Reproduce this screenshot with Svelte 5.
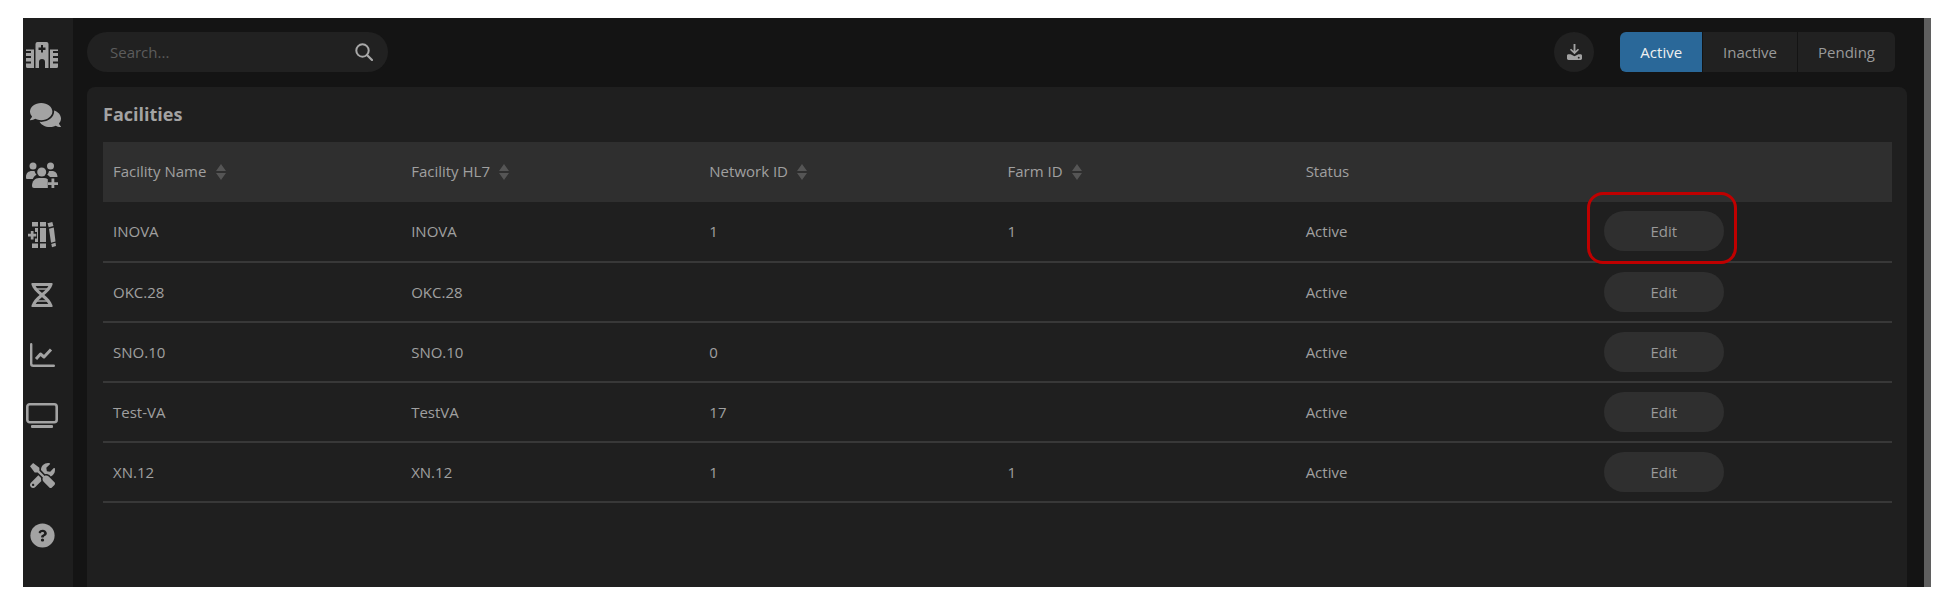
<script lang="ts">
	const columns = [
		{ label: 'Facility Name', sortable: true },
		{ label: 'Facility HL7', sortable: true },
		{ label: 'Network ID', sortable: true },
		{ label: 'Farm ID', sortable: true },
		{ label: 'Status', sortable: false },
		{ label: '', sortable: false }
	];

	const facilities = [
		{ name: 'INOVA', hl7: 'INOVA', network: '1', farm: '1', status: 'Active' },
		{ name: 'OKC.28', hl7: 'OKC.28', network: '', farm: '', status: 'Active' },
		{ name: 'SNO.10', hl7: 'SNO.10', network: '0', farm: '', status: 'Active' },
		{ name: 'Test-VA', hl7: 'TestVA', network: '17', farm: '', status: 'Active' },
		{ name: 'XN.12', hl7: 'XN.12', network: '1', farm: '1', status: 'Active' }
	];

	const tabs = ['Active', 'Inactive', 'Pending'];
	let activeTab = $state('Active');
</script>

<div class="frame">
	<nav class="sidebar">
		<a href="#facilities" aria-label="Facilities">
			<svg viewBox="0 0 32 26" width="32" height="26">
				<g fill="currentColor" fill-rule="evenodd">
					<path d="M9.500 2a2 2 0 0 1 2-2h9a2 2 0 0 1 2 2v24H19v-6a3 3 0 0 0-6 0v6H9.500zM15 3v2.500h-2.500v2.500H15v2.500h2V8h2.500V5.500H17V3z"/>
					<path d="M0 7.500h8V26H1.500A1.500 1.500 0 0 1 0 24.500v-3h5v-2H0V16h5v-2H0v-3h5V9H0z"/>
					<path d="M32 7.500h-8V26h6.500a1.500 1.500 0 0 0 1.500-1.500v-3h-5v-2h5V16h-5v-2h5v-3h-5V9h5z"/>
				</g>
			</svg>
		</a>
		<a href="#messages" class="shift" aria-label="Messages">
			<svg viewBox="0 0 576 512" width="31" height="28">
				<path fill="currentColor" d="M416 192c0-88.4-93.1-160-208-160S0 103.6 0 192c0 34.3 14.1 65.9 38 92-13.4 30.2-35.5 54.2-35.8 54.5-2.2 2.3-2.8 5.7-1.5 8.7S4.8 352 8 352c36.6 0 66.9-12.3 88.7-25 32.2 15.7 70.3 25 111.3 25 114.9 0 208-71.6 208-160zm122 220c23.9-26 38-57.7 38-92 0-66.9-53.5-124.2-129.3-148.1.9 6.6 1.3 13.3 1.3 20.1 0 105.9-107.7 192-240 192-10.8 0-21.3-.8-31.7-1.9C207.8 439.6 281.8 480 368 480c41 0 79.1-9.2 111.3-25 21.8 12.7 52.1 25 88.7 25 3.2 0 6.1-1.9 7.3-4.8 1.3-2.9.7-6.3-1.5-8.7-.3-.3-22.4-24.2-35.8-54.5z"/>
			</svg>
		</a>
		<a href="#users" aria-label="Users">
			<svg viewBox="0 0 32 26" width="32" height="26">
				<g fill="currentColor">
					<circle cx="7" cy="4" r="3.500"/>
					<circle cx="24.500" cy="4" r="3.500"/>
					<path d="M0 15c0-4 2.500-6 6-6h2.500c.3 1.500 1 2.800 2 3.800-1.700 1-3 2.400-3.700 4.200H1a1 1 0 0 1-1-1zM23 9h3c3 0 5.500 2 5.500 6H24c-.8-1-1.700-1.700-2.800-2.300 1-1 1.600-2.300 1.800-3.700z"/>
					<circle cx="15.700" cy="10" r="4.500"/>
					<path d="M6 24c0-5 3-8 7-8h5c1.500 0 2.800.4 3.800 1.200V26H8a2 2 0 0 1-2-2z"/>
					<path d="M25.500 16.500h2.800v3.700H32V23h-3.700v3h-2.800v-3H22v-2.800h3.500z"/>
				</g>
			</svg>
		</a>
		<a href="#library" aria-label="Library">
			<svg viewBox="0 0 28 26" width="28" height="26">
				<g fill="currentColor">
					<path d="M4 0h6v4.500H4zM12 0h6v4.500h-6zM7 6h3v4H7zM10 6v14H7v-3.500h2V9.500H7V6zM12 6h6v14h-6zM4 21.500h6V26H4zM12 21.500h6V26h-6z"/>
					<path d="M2.800 9h2.700v2.800h2.800v2.700H5.500v3H2.800v-3H0v-2.700h2.800z"/>
					<path d="M19.500 1.200l4.800-1.200 1.100 4-4.700 1.300zM21 6.700l4.800-1.300 1.700 14-4.500 1.300zM23.300 22l4.200-1.200.500 3.200-4 1.300z"/>
				</g>
			</svg>
		</a>
		<a href="#genetics" aria-label="Genetics">
			<svg viewBox="0 0 22 26" width="22" height="26">
				<g fill="none" stroke="currentColor">
					<path stroke-width="3" d="M2 1c0 9 18 15 18 24M20 1C20 10 2 16 2 25"/>
					<path stroke-width="3" stroke-linecap="round" d="M2 2.500h18M2 23.500h18"/>
					<path stroke-width="1.500" d="M5 7h12M5 19h12"/>
				</g>
			</svg>
		</a>
		<a href="#reports" aria-label="Reports">
			<svg viewBox="0 0 25 24" width="25" height="24">
				<path fill="none" stroke="currentColor" stroke-width="2.400" stroke-linecap="round" stroke-linejoin="round" d="M1.200 1.200v19.600a2 2 0 0 0 2 2h20.600"/>
				<path fill="none" stroke="currentColor" stroke-width="3" stroke-linejoin="round" d="M6 16l4.500-5 3.500 3 7-7.500"/>
			</svg>
		</a>
		<a href="#devices" aria-label="Devices">
			<svg viewBox="0 0 32 25" width="32" height="25">
				<rect x="1.300" y="1.300" width="29.400" height="17.900" rx="2.500" fill="none" stroke="currentColor" stroke-width="2.600"/>
				<rect x="5" y="22" width="22" height="3" rx="1" fill="currentColor"/>
			</svg>
		</a>
		<a href="#tools" aria-label="Tools">
			<svg viewBox="0 0 512 512" width="25" height="25">
				<path fill="currentColor" d="M501.1 395.7L384 278.6c-23.1-23.1-57.6-27.6-85.4-13.9L192 158.1V96L64 0 0 64l96 128h62.1l106.6 106.6c-13.6 27.8-9.2 62.3 13.9 85.4l117.1 117.1c14.6 14.6 38.2 14.6 52.7 0l52.7-52.7c14.5-14.6 14.5-38.2 0-52.7zM331.7 225c28.3 0 54.9 11 74.9 31l19.4 19.4c15.8-6.9 30.8-16.5 43.8-29.5 37.1-37.1 49.7-89.3 37.9-136.7-2.2-9-13.5-12.1-20.1-5.500l-74.4 74.4-67.9-11.3L334 98.900l74.4-74.4c6.600-6.600 3.400-17.900-5.700-20.200-47.400-11.700-99.600.9-136.600 37.900-28.500 28.500-41.900 66.100-41.200 103.600l82.100 82.100c8.100-1.900 16.500-2.900 24.700-2.900zm-103.900 82l-56.700-56.700L18.700 402.800c-25 25-25 65.500 0 90.500s65.500 25 90.500 0l123.600-123.600c-7.600-19.900-9.900-41.600-5-62.700zM64 472c-13.200 0-24-10.800-24-24 0-13.300 10.700-24 24-24s24 10.700 24 24c0 13.200-10.700 24-24 24z"/>
			</svg>
		</a>
		<a href="#help" aria-label="Help">
			<svg viewBox="0 0 512 512" width="25" height="25">
				<circle cx="256" cy="256" r="248" fill="currentColor"/>
				<path fill="#1e1e1e" transform="translate(256 256) scale(.72) translate(-256 -256)" d="M262.655 90c-54.497 0-89.255 22.957-116.549 63.758-3.536 5.286-2.353 12.415 2.715 16.258l34.699 26.31c5.205 3.947 12.621 3.008 16.665-2.122 17.864-22.658 30.113-35.797 57.303-35.797 20.429 0 45.698 13.148 45.698 32.958 0 14.976-12.363 22.667-32.534 33.976C247.128 238.528 216 254.941 216 296v4c0 6.627 5.373 12 12 12h56c6.627 0 12-5.373 12-12v-1.333c0-28.462 83.186-29.647 83.186-106.667 0-58.002-60.165-102-116.531-102zM256 338c-25.365 0-46 20.635-46 46 0 25.364 20.635 46 46 46s46-20.636 46-46c0-25.365-20.635-46-46-46z"/>
			</svg>
		</a>
	</nav>

	<main class="content">
		<header class="toolbar">
			<label class="search">
				<input type="text" placeholder="Search..." />
				<svg viewBox="0 0 18 18" width="18" height="18">
					<circle cx="7.500" cy="7.500" r="6.200" fill="none" stroke="currentColor" stroke-width="2"/>
					<path d="M12 12l5 5" stroke="currentColor" stroke-width="2.200" stroke-linecap="round"/>
				</svg>
			</label>
			<div class="actions">
				<button class="download" aria-label="Download">
					<svg viewBox="0 0 16 17" width="15" height="16">
						<path fill="currentColor" d="M7 0h2v7.500l2.600-2.600 1.300 1.300L8 11 3.100 6.200l1.300-1.300L7 7.500z"/>
						<path fill="currentColor" fill-rule="evenodd" d="M1.500 11h2.300L8 13l4.200-2h2.300c.8 0 1.500.7 1.500 1.500v3c0 .8-.7 1.500-1.500 1.500h-13C.7 17 0 16.300 0 15.500v-3C0 11.700.7 11 1.500 11zM12.500 13.500a1 1 0 1 0 0 2 1 1 0 0 0 0-2z"/>
					</svg>
				</button>
				<div class="tabs">
					{#each tabs as tab}
						<button class:active={tab === activeTab} onclick={() => (activeTab = tab)}>{tab}</button>
					{/each}
				</div>
			</div>
		</header>

		<section class="panel">
			<h1>Facilities</h1>
			<table>
				<thead>
					<tr>
						{#each columns as col}
							<th>
								{col.label}
								{#if col.sortable}
									<svg class="sort" viewBox="0 0 10 16" width="10" height="16">
										<path fill="currentColor" d="M5 0l5 7H0zM5 16L0 9h10z"/>
									</svg>
								{/if}
							</th>
						{/each}
					</tr>
				</thead>
				<tbody>
					{#each facilities as row, i}
						<tr>
							<td>{row.name}</td>
							<td>{row.hl7}</td>
							<td>{row.network}</td>
							<td>{row.farm}</td>
							<td>{row.status}</td>
							<td class="edit-cell">
								<span class="edit-wrap">
									<button class="edit">Edit</button>
									{#if i === 0}
										<span class="callout"></span>
									{/if}
								</span>
							</td>
						</tr>
					{/each}
				</tbody>
			</table>
		</section>
	</main>

	<div class="scrollbar"></div>
</div>

<style>
	:global(body) {
		margin: 0;
		background: #fff;
	}
	.frame {
		display: flex;
		width: 1908px;
		height: 569px;
		margin: 18px 0 0 23px;
		background: #141414;
		overflow: hidden;
		font-family: 'Open Sans', 'Liberation Sans', sans-serif;
		font-size: 15px;
		color: #a0a0a0;
	}
	.sidebar {
		display: flex;
		flex-direction: column;
		flex: none;
		width: 50px;
		padding: 7px 12px 0 0;
		box-sizing: border-box;
		background: #1e1e1e;
	}
	.sidebar a {
		display: flex;
		align-items: center;
		justify-content: center;
		flex: none;
		height: 60px;
		color: #a3a3a3;
	}
	.sidebar a.shift {
		padding-left: 6px;
	}
	.content {
		flex: 1;
		min-width: 0;
		padding: 14px 17px 0 14px;
	}
	.toolbar {
		display: flex;
		justify-content: space-between;
		height: 40px;
		margin-bottom: 15px;
	}
	.search {
		display: flex;
		align-items: center;
		width: 301px;
		padding: 0 15px 0 23px;
		box-sizing: border-box;
		background: #212121;
		border-radius: 20px;
		color: #a8a8a8;
	}
	.search input {
		flex: 1;
		min-width: 0;
		border: 0;
		padding: 0;
		background: none;
		font: inherit;
		color: inherit;
		outline: none;
	}
	.search input::placeholder {
		color: #5c5c5c;
		opacity: 1;
	}
	.actions {
		display: flex;
		gap: 26px;
		padding-right: 12px;
	}
	button {
		border: 0;
		font: inherit;
		color: inherit;
	}
	.download {
		display: flex;
		align-items: center;
		justify-content: center;
		width: 40px;
		height: 40px;
		padding: 0;
		border-radius: 50%;
		background: #212121;
		color: #a3a3a3;
	}
	.tabs {
		display: flex;
		gap: 1px;
		border-radius: 6px;
		overflow: hidden;
	}
	.tabs button {
		height: 40px;
		padding: 0 20px;
		background: #212121;
		color: #9a9a9a;
	}
	.tabs button.active {
		background: #2a6899;
		color: #f0f0f0;
	}
	.panel {
		height: 500px;
		padding: 14px 15px 0 16px;
		box-sizing: border-box;
		background: #1f1f1f;
		border-radius: 8px 8px 0 0;
	}
	h1 {
		margin: 0 0 14px;
		font-size: 18px;
		line-height: 27px;
		font-weight: 700;
		color: #a3a3a3;
	}
	table {
		width: 100%;
		table-layout: fixed;
		border-collapse: collapse;
	}
	th {
		height: 60px;
		padding: 0 10px 2px;
		box-sizing: border-box;
		background: #2f2f2f;
		font-weight: 400;
		text-align: left;
		color: #a0a0a0;
	}
	.sort {
		margin-left: 5.500px;
		vertical-align: -3px;
		color: #555;
	}
	td {
		height: 60px;
		padding: 0 10px 1px;
		box-sizing: border-box;
		border-bottom: 2px solid #383838;
		color: #a0a0a0;
	}
	.edit-wrap {
		display: inline-block;
		position: relative;
		vertical-align: middle;
	}
	.edit {
		display: block;
		width: 120px;
		height: 40px;
		padding: 0;
		border-radius: 20px;
		background: #2f2f2f;
		color: #999;
	}
	.callout {
		position: absolute;
		left: -17px;
		top: -19px;
		width: 150px;
		height: 72px;
		box-sizing: border-box;
		border: 3px solid #bf0000;
		border-radius: 16px;
		pointer-events: none;
	}
	.scrollbar {
		flex: none;
		width: 7px;
		background: #5f5f5f;
	}
</style>
